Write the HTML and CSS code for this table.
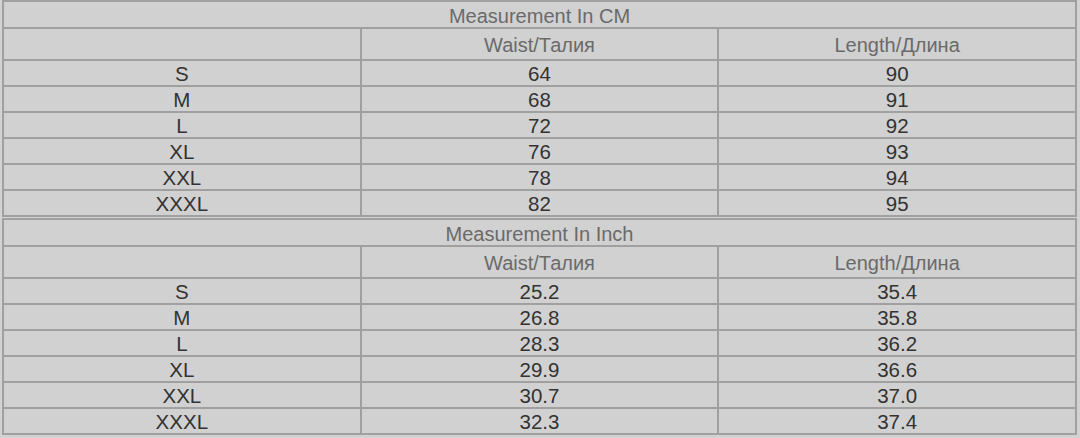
FILE: index.html
```html
<!DOCTYPE html>
<html>
<head>
<meta charset="utf-8">
<link rel="stylesheet" href="styles.css">
</head>
<body>
<div class="sheet">
  <table class="size-table">
    <tr class="title-row"><td colspan="3">Measurement In CM</td></tr>
    <tr class="head-row"><td></td><td>Waist/Талия</td><td>Length/Длина</td></tr>
    <tr><td>S</td><td>64</td><td>90</td></tr>
    <tr><td>M</td><td>68</td><td>91</td></tr>
    <tr><td>L</td><td>72</td><td>92</td></tr>
    <tr><td>XL</td><td>76</td><td>93</td></tr>
    <tr><td>XXL</td><td>78</td><td>94</td></tr>
    <tr><td>XXXL</td><td>82</td><td>95</td></tr>
  </table>
  <table class="size-table second">
    <tr class="title-row"><td colspan="3">Measurement In Inch</td></tr>
    <tr class="head-row"><td></td><td>Waist/Талия</td><td>Length/Длина</td></tr>
    <tr><td>S</td><td>25.2</td><td>35.4</td></tr>
    <tr><td>M</td><td>26.8</td><td>35.8</td></tr>
    <tr><td>L</td><td>28.3</td><td>36.2</td></tr>
    <tr><td>XL</td><td>29.9</td><td>36.6</td></tr>
    <tr><td>XXL</td><td>30.7</td><td>37.0</td></tr>
    <tr><td>XXXL</td><td>32.3</td><td>37.4</td></tr>
  </table>
</div>
</body>
</html>
```
FILE: styles.css
```css
html, body {
  margin: 0;
  padding: 0;
  background: #d2d2d2;
}
.sheet {
  padding: 0 0 0 2px;
  width: 1076px;
}
.size-table {
  width: 1075px;
  border-collapse: collapse;
  table-layout: fixed;
  font-family: "Liberation Sans", Arial, sans-serif;
  background: #d1d1d1;
  border: 2px solid #a0a0a0;
}
.size-table td {
  border: 2px solid #a0a0a0;
  padding: 2px 0 0 0;
  text-align: center;
  vertical-align: middle;
  color: #333333;
  font-size: 20.5px;
  line-height: 20px;
  height: 22px;
}
.size-table .title-row td {
  color: #6a6a6a;
  font-size: 20px;
  height: 23px;
}
.size-table .head-row td {
  color: #6a6a6a;
  font-size: 20px;
  height: 28px;
}
.second {
  margin-top: 1px;
}
```
